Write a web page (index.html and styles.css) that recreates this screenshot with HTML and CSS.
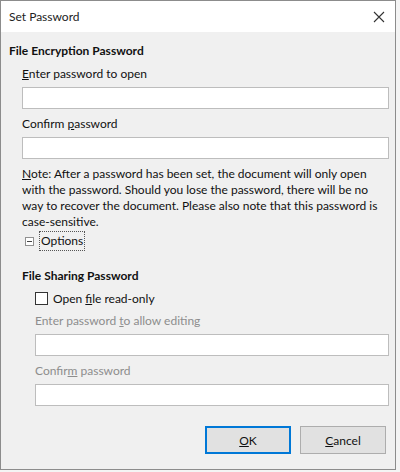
FILE: index.html
```html
<!DOCTYPE html>
<html lang="en">
<head>
    <meta charset="UTF-8">
    <title>Set Password</title>
    <link rel="stylesheet" href="styles.css">
</head>
<body>
    <div class="dialog">
        <div class="title-bar">
            <span class="title">Set Password</span>
            <svg class="close" width="12" height="12" viewBox="0 0 12 12">
                <path d="M1 1 L11 11 M11 1 L1 11" stroke="#333" stroke-width="1.1" fill="none"/>
            </svg>
        </div>

        <div class="content">
            <div class="section-title">File Encryption Password</div>
            <div class="section">
                <label class="field-label"><u>E</u>nter password to open</label>
                <div class="input"></div>
                <label class="field-label">Confirm <u>p</u>assword</label>
                <div class="input"></div>
                <p class="note"><u>N</u>ote: After a password has been set, the document will only open with the password. Should you lose the password, there will be no way to recover the document. Please also note that this password is case-sensitive.</p>
                <div class="expander">
                    <span class="expander-box"></span>
                    <span class="expander-label">Options</span>
                </div>

                <div class="section-title sub">File Sharing Password</div>
                <div class="section">
                    <label class="check-row">
                        <span class="checkbox"></span>
                        <span>Open <u>f</u>ile read-only</span>
                    </label>
                    <label class="field-label disabled">Enter password <u>t</u>o allow editing</label>
                    <div class="input"></div>
                    <label class="field-label disabled">Confir<u>m</u> password</label>
                    <div class="input"></div>
                </div>
            </div>

            <div class="buttons">
                <button class="btn default"><u>O</u>K</button>
                <button class="btn"><u>C</u>ancel</button>
            </div>
        </div>
    </div>
</body>
</html>
```

FILE: styles.css
```css
* {
    margin: 0;
    padding: 0;
    box-sizing: border-box;
}

body {
    width: 400px;
    height: 472px;
    background: #f4f4f4;
    font-family: 'Lato', 'Noto Sans', sans-serif;
    font-size: 12px;
    color: #111;
    overflow: hidden;
}

.dialog {
    width: 396px;
    height: 470px;
    background: #f0f0f0;
    border: 1px solid #8c8c8c;
    display: flex;
    flex-direction: column;
}

.title-bar {
    height: 31px;
    background: #fff;
    display: flex;
    align-items: center;
    justify-content: space-between;
    padding: 0 9px 0 8px;
    flex-shrink: 0;
}

.title {
    font-size: 12px;
    color: #222;
}

.close {
    margin-right: 1px;
}

.content {
    padding: 11px 6px 0 8px;
    display: flex;
    flex-direction: column;
    flex: 1;
}

.section-title {
    font-weight: 700;
    height: 16px;
    line-height: 16px;
}

.section {
    padding-left: 13px;
    display: flex;
    flex-direction: column;
}

.field-label {
    display: block;
    height: 16px;
    line-height: 16px;
    margin-top: 7px;
}

.field-label.disabled {
    color: #8d8d8d;
}

.input {
    height: 22px;
    background: #fff;
    border: 1px solid #bdbdbd;
    margin-top: 5px;
}

.note {
    margin-top: 7px;
    line-height: 16px;
    padding-right: 4px;
}

.expander {
    display: flex;
    align-items: center;
    margin-top: 1px;
    height: 20px;
}

.expander-box {
    width: 9px;
    height: 9px;
    border: 1px solid #909090;
    margin: 0 5px 0 3px;
    position: relative;
    background: #fff;
}

.expander-box::after {
    content: "";
    position: absolute;
    left: 1px;
    top: 3px;
    width: 5px;
    height: 1px;
    background: #444;
}

.expander-label {
    border: 1px dotted #555;
    padding: 1px;
    line-height: 16px;
}

.section-title.sub {
    margin-top: 17px;
}

.check-row {
    display: flex;
    align-items: center;
    height: 16px;
    margin-top: 6px;
}

.checkbox {
    width: 13px;
    height: 13px;
    border: 1px solid #333;
    background: #fff;
    margin-right: 5px;
}

.buttons {
    display: flex;
    justify-content: flex-end;
    gap: 9px;
    margin-top: 20px;
    padding-right: 3px;
}

.btn {
    width: 86px;
    height: 28px;
    background: #e1e1e1;
    border: 1px solid #adadad;
    font-family: inherit;
    font-size: 12px;
    color: #111;
}

.btn.default {
    border: 2px solid #0078d7;
}
```
